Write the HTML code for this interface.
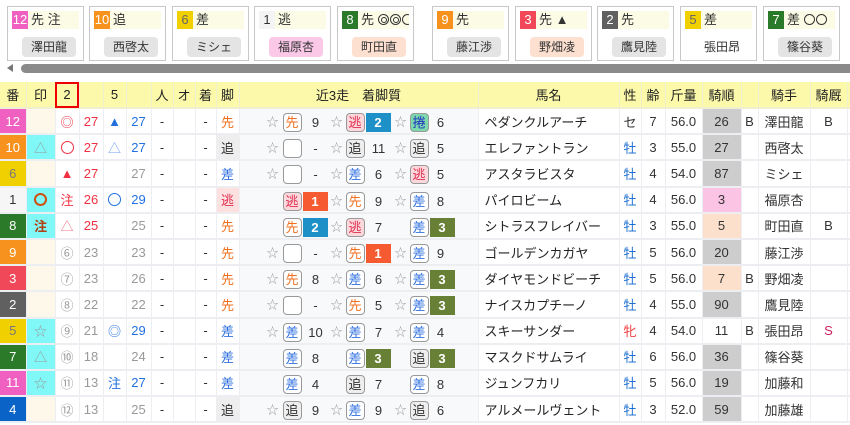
<!DOCTYPE html>
<html><head><meta charset="utf-8">
<style>
*{margin:0;padding:0;box-sizing:border-box}
body{width:850px;height:425px;overflow:hidden;background:#fff;font-family:"Liberation Sans","Noto Sans CJK JP",sans-serif;font-size:13px;color:#333;position:relative}
.card{position:absolute;top:6px;width:77px;height:55px;border:1px solid #c8c8c8;background:#fff}
.card .t{position:absolute;left:4px;top:4px;width:67px;height:18px;background:#fbfbe6;font-size:13px;line-height:18px;white-space:nowrap;overflow:hidden}
.card .n{display:inline-block;width:16px;height:18px;text-align:center;color:#fff;margin-right:3px}
.card .j{position:absolute;left:14px;top:30px;width:54px;height:20px;border-radius:4px;background:#e4e4e4;text-align:center;line-height:20px;font-size:12px}
.sb{position:absolute;left:21px;top:64px;width:840px;height:9px;border-radius:5px;background:#8a8a8a}
.arr{position:absolute;left:7px;top:64px;width:0;height:0;border-top:4.5px solid transparent;border-bottom:4.5px solid transparent;border-right:6px solid #777}
table{position:absolute;left:0;top:82px;border-collapse:collapse;table-layout:fixed;width:850px}
td,th{height:26.2px;text-align:center;border:1px solid #eceef1;border-width:0 1px 2px 0;white-space:nowrap;overflow:hidden;padding:0;font-weight:normal}
th{background:#fcf9aa;height:26px;font-size:13px;color:#222;border-color:#f0efd0}
.rc{position:relative;background:#f8f9fb}
.rc>*{position:absolute;top:4px;font-style:normal;font-weight:normal}
.s{color:#999;font-size:12px;top:5px!important;line-height:16px}
.bx{width:19px;height:19px;border:1px solid #999;border-radius:4px;line-height:17px;font-size:13px;background:#fff}
.o{color:#f07020}.r{background:#fcd8dc;color:#e03050}.b{color:#3070e0}.g{background:#eee;color:#333}.k{background:#7bd9ac;color:#2030c0}
.nm{width:20px;text-align:center;line-height:19px;color:#333}
.cn{width:25px;height:19px;color:#fff;font-weight:bold;line-height:19px;text-align:center}
.c1{background:#f55a30}.c2{background:#1e90c8}.c3{background:#687f36}
.nb{color:#fff}
.mk{background:#fdf8e9}
.cy{background:#80f8f8}
.rd{color:#f03040}.bl{color:#2070e0}.gr{color:#999}
.name{text-align:left;padding-left:6px;color:#222}
.kj{background:#cdcdcd}
.ws{color:#2070d0}
.ci{display:inline-block;width:13px;height:13px;border:1.5px solid currentColor;border-radius:50%;vertical-align:-2px}
.cs{display:inline-block;width:11px;height:11px;border:1.3px solid #333;border-radius:50%;vertical-align:-1px;margin-right:1px}
.cd{position:relative}.cd:after{content:"";position:absolute;left:2px;top:2px;width:4px;height:4px;border:1.2px solid #333;border-radius:50%}
</style></head><body>
<div class="card" style="left:7px"><div class="t"><span class="n" style="background:#f060c0">12</span>先 注</div><div class="j">澤田龍</div></div>
<div class="card" style="left:89px"><div class="t"><span class="n" style="background:#f7921e">10</span>追</div><div class="j">西啓太</div></div>
<div class="card" style="left:172px"><div class="t"><span class="n" style="background:#f0d000;color:#666">6</span>差</div><div class="j">ミシェ</div></div>
<div class="card" style="left:254px"><div class="t"><span class="n" style="background:#f4f4f4;color:#333">1</span>逃</div><div class="j" style="background:#fbc8e8">福原杏</div></div>
<div class="card" style="left:337px"><div class="t"><span class="n" style="background:#2a7a2a">8</span>先 <span class="cs cd"></span><span class="cs cd"></span><span class="cs"></span></div><div class="j" style="background:#fde0d0">町田直</div></div>
<div class="card" style="left:432px"><div class="t"><span class="n" style="background:#f7921e">9</span>先</div><div class="j">藤江渉</div></div>
<div class="card" style="left:515px"><div class="t"><span class="n" style="background:#f04858">3</span>先 ▲</div><div class="j" style="background:#fde0d0">野畑凌</div></div>
<div class="card" style="left:597px"><div class="t"><span class="n" style="background:#606060">2</span>先</div><div class="j">鷹見陸</div></div>
<div class="card" style="left:680px"><div class="t"><span class="n" style="background:#f0d000;color:#666">5</span>差</div><div class="j" style="background:none">張田昂</div></div>
<div class="card" style="left:763px"><div class="t"><span class="n" style="background:#2a7a2a">7</span>差 <span class="cs"></span><span class="cs"></span></div><div class="j">篠谷葵</div></div>
<div class="arr"></div><div class="sb"></div>

<table>
<colgroup><col style="width:26px"><col style="width:29px"><col style="width:24px"><col style="width:24px"><col style="width:23px"><col style="width:25px"><col style="width:22px"><col style="width:22px"><col style="width:21px"><col style="width:23px"><col style="width:239px"><col style="width:141px"><col style="width:22px"><col style="width:24px"><col style="width:37px"><col style="width:39px"><col style="width:17px"><col style="width:52px"><col style="width:37px"><col style="width:3px"></colgroup>
<tr><th>番</th><th>印</th><th style="outline:2px solid #e00;outline-offset:-2px">2</th><th></th><th>5</th><th></th><th>人</th><th>オ</th><th>着</th><th>脚</th><th>近3走　着脚質</th><th>馬名</th><th>性</th><th>齢</th><th>斤量</th><th>騎順</th><th></th><th>騎手</th><th>騎厩</th><th></th></tr>

<tr><td class="nb" style="background:#f060c0">12</td><td class="mk"></td><td class="rd">◎</td><td class="rd">27</td><td class="bl">▲</td><td class="bl">27</td><td>-</td><td></td><td>-</td><td class="o">先</td>
<td class="rc"><i class="s" style="left:27px">☆</i><b class="bx o" style="left:43px">先</b><em class="nm" style="left:66px">9</em><i class="s" style="left:91px">☆</i><b class="bx r" style="left:106px">逃</b><em class="cn c2" style="left:126px">2</em><i class="s" style="left:155px">☆</i><b class="bx k" style="left:170px">捲</b><em class="nm" style="left:191px">6</em></td>
<td class="name">ペダンクルアーチ</td><td>セ</td><td>7</td><td>56.0</td><td class="kj">26</td><td>B</td><td>澤田龍</td><td>B</td><td></td></tr>

<tr><td class="nb" style="background:#f7921e">10</td><td class="cy gr">△</td><td class="rd"><span class="ci"></span></td><td class="rd">27</td><td class="bl" style="color:#70a0f0">△</td><td class="bl">27</td><td>-</td><td></td><td>-</td><td style="background:#eee">追</td>
<td class="rc"><i class="s" style="left:27px">☆</i><b class="bx" style="left:43px"></b><em class="nm" style="left:66px">-</em><i class="s" style="left:91px">☆</i><b class="bx g" style="left:106px">追</b><em class="nm" style="left:129px">11</em><i class="s" style="left:155px">☆</i><b class="bx g" style="left:170px">追</b><em class="nm" style="left:191px">5</em></td>
<td class="name">エレファントラン</td><td class="ws">牡</td><td>3</td><td>55.0</td><td class="kj">27</td><td></td><td>西啓太</td><td></td><td></td></tr>

<tr><td style="background:#f0d000;color:#777">6</td><td class="mk"></td><td class="rd">▲</td><td class="rd">27</td><td></td><td class="gr">27</td><td>-</td><td></td><td>-</td><td class="b">差</td>
<td class="rc"><i class="s" style="left:27px">☆</i><b class="bx" style="left:43px"></b><em class="nm" style="left:66px">-</em><i class="s" style="left:91px">☆</i><b class="bx b" style="left:106px">差</b><em class="nm" style="left:129px">6</em><i class="s" style="left:155px">☆</i><b class="bx r" style="left:170px">逃</b><em class="nm" style="left:191px">5</em></td>
<td class="name">アスタラビスタ</td><td class="ws">牡</td><td>4</td><td>54.0</td><td class="kj">87</td><td></td><td>ミシェ</td><td></td><td></td></tr>

<tr><td style="background:#f6f6f6">1</td><td class="cy" style="color:#d05010"><span class="ci" style="border-width:2px"></span></td><td class="rd">注</td><td class="rd">26</td><td class="bl"><span class="ci"></span></td><td class="bl">29</td><td>-</td><td></td><td>-</td><td style="background:#fde0e0;color:#e03050">逃</td>
<td class="rc"><b class="bx r" style="left:43px">逃</b><em class="cn c1" style="left:63px">1</em><i class="s" style="left:91px">☆</i><b class="bx o" style="left:106px">先</b><em class="nm" style="left:129px">9</em><i class="s" style="left:155px">☆</i><b class="bx b" style="left:170px">差</b><em class="nm" style="left:191px">8</em></td>
<td class="name">パイロビーム</td><td class="ws">牡</td><td>4</td><td>56.0</td><td style="background:#fcc4e4">3</td><td></td><td>福原杏</td><td></td><td></td></tr>

<tr><td class="nb" style="background:#2a7a2a">8</td><td class="cy" style="color:#b04010;font-weight:bold">注</td><td style="color:#f07080">△</td><td class="rd">25</td><td></td><td class="gr">25</td><td>-</td><td></td><td>-</td><td class="o">先</td>
<td class="rc"><b class="bx o" style="left:43px">先</b><em class="cn c2" style="left:63px">2</em><i class="s" style="left:91px">☆</i><b class="bx r" style="left:106px">逃</b><em class="nm" style="left:129px">7</em><b class="bx b" style="left:170px">差</b><em class="cn c3" style="left:190px">3</em></td>
<td class="name">シトラスフレイバー</td><td class="ws">牡</td><td>3</td><td>55.0</td><td style="background:#fde0cc">5</td><td></td><td>町田直</td><td>B</td><td></td></tr>

<tr><td class="nb" style="background:#f7921e">9</td><td class="mk"></td><td class="gr">⑥</td><td class="gr">23</td><td></td><td class="gr">23</td><td>-</td><td></td><td>-</td><td class="o">先</td>
<td class="rc"><i class="s" style="left:27px">☆</i><b class="bx" style="left:43px"></b><em class="nm" style="left:66px">-</em><i class="s" style="left:91px">☆</i><b class="bx o" style="left:106px">先</b><em class="cn c1" style="left:126px">1</em><i class="s" style="left:155px">☆</i><b class="bx b" style="left:170px">差</b><em class="nm" style="left:191px">9</em></td>
<td class="name">ゴールデンカガヤ</td><td class="ws">牡</td><td>5</td><td>56.0</td><td class="kj">20</td><td></td><td>藤江渉</td><td></td><td></td></tr>

<tr><td class="nb" style="background:#f04858">3</td><td class="mk"></td><td class="gr">⑦</td><td class="gr">23</td><td></td><td class="gr">26</td><td>-</td><td></td><td>-</td><td class="o">先</td>
<td class="rc"><i class="s" style="left:27px">☆</i><b class="bx o" style="left:43px">先</b><em class="nm" style="left:66px">8</em><i class="s" style="left:91px">☆</i><b class="bx b" style="left:106px">差</b><em class="nm" style="left:129px">6</em><i class="s" style="left:155px">☆</i><b class="bx b" style="left:170px">差</b><em class="cn c3" style="left:190px">3</em></td>
<td class="name">ダイヤモンドビーチ</td><td class="ws">牡</td><td>5</td><td>56.0</td><td style="background:#fde0cc">7</td><td>B</td><td>野畑凌</td><td></td><td></td></tr>

<tr><td class="nb" style="background:#606060">2</td><td class="mk"></td><td class="gr">⑧</td><td class="gr">22</td><td></td><td class="gr">22</td><td>-</td><td></td><td>-</td><td class="o">先</td>
<td class="rc"><i class="s" style="left:27px">☆</i><b class="bx" style="left:43px"></b><em class="nm" style="left:66px">-</em><i class="s" style="left:91px">☆</i><b class="bx o" style="left:106px">先</b><em class="nm" style="left:129px">5</em><i class="s" style="left:155px">☆</i><b class="bx b" style="left:170px">差</b><em class="cn c3" style="left:190px">3</em></td>
<td class="name">ナイスカプチーノ</td><td class="ws">牡</td><td>4</td><td>55.0</td><td class="kj">90</td><td></td><td>鷹見陸</td><td></td><td></td></tr>

<tr><td style="background:#f0d000;color:#777">5</td><td class="cy gr">☆</td><td class="gr">⑨</td><td class="gr">21</td><td class="bl">◎</td><td class="bl">29</td><td>-</td><td></td><td>-</td><td class="b">差</td>
<td class="rc"><i class="s" style="left:27px">☆</i><b class="bx b" style="left:43px">差</b><em class="nm" style="left:66px">10</em><i class="s" style="left:91px">☆</i><b class="bx b" style="left:106px">差</b><em class="nm" style="left:129px">7</em><i class="s" style="left:155px">☆</i><b class="bx b" style="left:170px">差</b><em class="nm" style="left:191px">4</em></td>
<td class="name">スキーサンダー</td><td style="color:#f04040">牝</td><td>4</td><td>54.0</td><td>11</td><td>B</td><td>張田昂</td><td style="color:#d02060">S</td><td></td></tr>

<tr><td class="nb" style="background:#2a7a2a">7</td><td class="cy gr">△</td><td class="gr">⑩</td><td class="gr">18</td><td></td><td class="gr">24</td><td>-</td><td></td><td>-</td><td class="b">差</td>
<td class="rc"><b class="bx b" style="left:43px">差</b><em class="nm" style="left:66px">8</em><b class="bx b" style="left:106px">差</b><em class="cn c3" style="left:126px">3</em><b class="bx g" style="left:170px">追</b><em class="cn c3" style="left:190px">3</em></td>
<td class="name">マスクドサムライ</td><td class="ws">牡</td><td>6</td><td>56.0</td><td class="kj">36</td><td></td><td>篠谷葵</td><td></td><td></td></tr>

<tr><td class="nb" style="background:#f060c0">11</td><td class="cy gr">☆</td><td class="gr">⑪</td><td class="gr">13</td><td class="bl">注</td><td class="bl">27</td><td>-</td><td></td><td>-</td><td class="b">差</td>
<td class="rc"><b class="bx b" style="left:43px">差</b><em class="nm" style="left:66px">4</em><b class="bx g" style="left:106px">追</b><em class="nm" style="left:129px">7</em><b class="bx b" style="left:170px">差</b><em class="nm" style="left:191px">8</em></td>
<td class="name">ジュンフカリ</td><td class="ws">牡</td><td>5</td><td>56.0</td><td class="kj">19</td><td></td><td>加藤和</td><td></td><td></td></tr>

<tr><td class="nb" style="background:#0a64c8">4</td><td class="mk"></td><td class="gr">⑫</td><td class="gr">13</td><td></td><td class="gr">25</td><td>-</td><td></td><td>-</td><td style="background:#eee">追</td>
<td class="rc"><i class="s" style="left:27px">☆</i><b class="bx g" style="left:43px">追</b><em class="nm" style="left:66px">9</em><i class="s" style="left:91px">☆</i><b class="bx b" style="left:106px">差</b><em class="nm" style="left:129px">9</em><i class="s" style="left:155px">☆</i><b class="bx g" style="left:170px">追</b><em class="nm" style="left:191px">6</em></td>
<td class="name">アルメールヴェント</td><td class="ws">牡</td><td>3</td><td>52.0</td><td class="kj">59</td><td></td><td>加藤雄</td><td></td><td></td></tr>
</table>
</body></html>
